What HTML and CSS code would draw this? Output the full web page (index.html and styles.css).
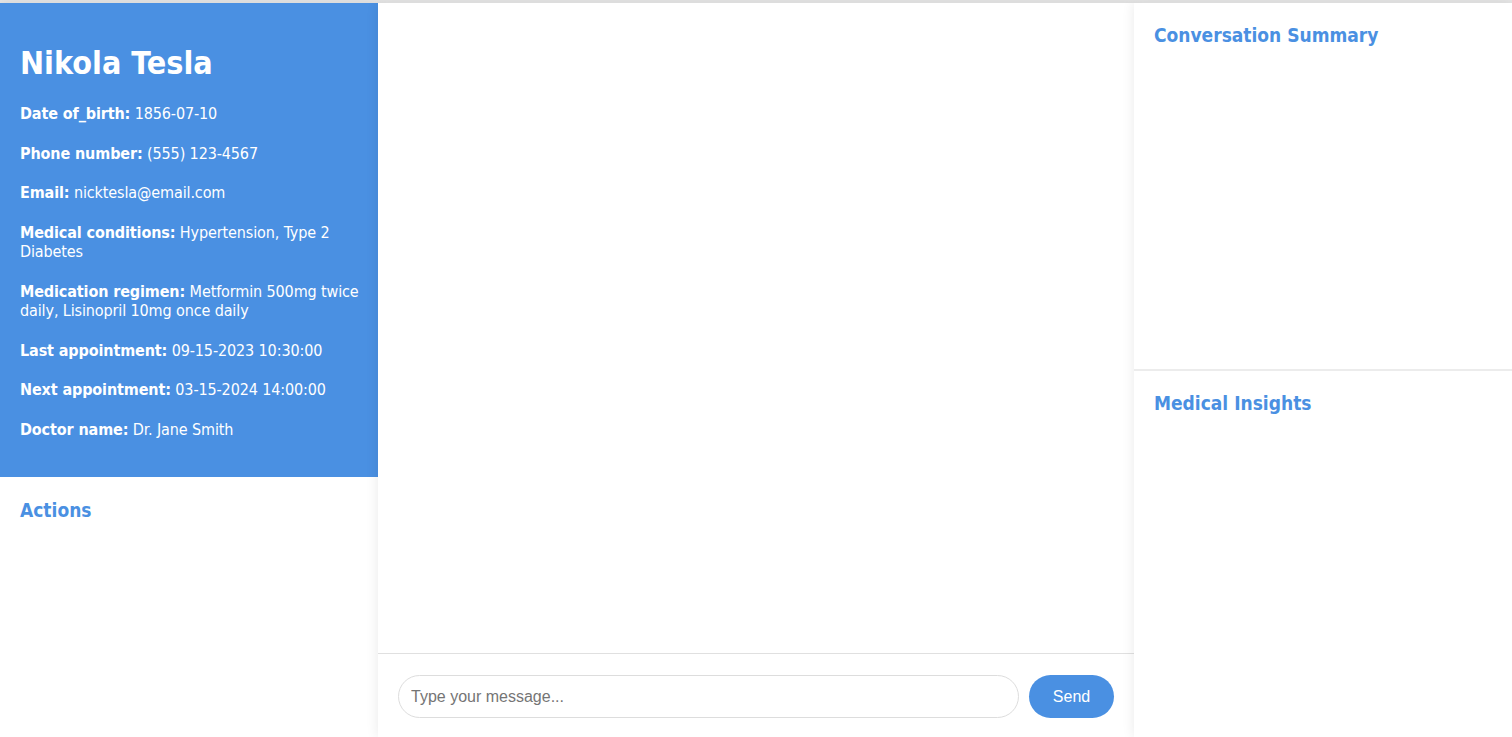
FILE: index.html
```html
<!DOCTYPE html>
<html lang="en">
<head>
<meta charset="utf-8">
<title>Patient Chat</title>
<link rel="stylesheet" href="styles.css">
</head>
<body>
<div class="app">
  <aside class="sidebar panel">
    <section class="patient">
      <h1 class="patient-name">Nikola Tesla</h1>
      <p><strong>Date of_birth:</strong> 1856-07-10</p>
      <p><strong>Phone number:</strong> (555) 123-4567</p>
      <p><strong>Email:</strong> nicktesla@email.com</p>
      <p><strong>Medical conditions:</strong> Hypertension, Type 2 Diabetes</p>
      <p><strong>Medication regimen:</strong> Metformin 500mg twice daily, Lisinopril 10mg once daily</p>
      <p><strong>Last appointment:</strong> 09-15-2023 10:30:00</p>
      <p><strong>Next appointment:</strong> 03-15-2024 14:00:00</p>
      <p><strong>Doctor name:</strong> Dr. Jane Smith</p>
    </section>
    <section class="actions">
      <h2 class="section-title">Actions</h2>
    </section>
  </aside>
  <main class="chat panel">
    <div class="messages"></div>
    <form class="composer">
      <input class="composer-input" type="text" placeholder="Type your message...">
      <button class="composer-send" type="button">Send</button>
    </form>
  </main>
  <aside class="insights panel">
    <section class="insight-block">
      <h2 class="section-title">Conversation Summary</h2>
    </section>
    <section class="insight-block insight-block--bordered">
      <h2 class="section-title">Medical Insights</h2>
    </section>
  </aside>
</div>
</body>
</html>
```
FILE: styles.css
```css
* { box-sizing: border-box; }
html, body { height: 100%; }
body {
  margin: 0;
  background: #e6e6e6;
  font-family: "DejaVu Sans Condensed", "DejaVu Sans", sans-serif;
  overflow: hidden;
}
.app {
  margin-top: 3px;
  height: 734px;
  display: grid;
  grid-template-columns: 378px 756px 378px;
}
.panel {
  background: #fff;
  box-shadow: 0 0 12px rgba(0, 0, 0, 0.09);
  display: flex;
  flex-direction: column;
  min-height: 0;
}
.patient {
  background: #4a90e2;
  color: #fff;
  padding: 20px 14px 18px 20px;
}
.patient-name {
  font-size: 32px;
  font-weight: bold;
  margin: 21px 0 22px;
  line-height: 38px;
}
.patient p {
  font-size: 16px;
  line-height: 19.5px;
  letter-spacing: -0.12px;
  margin: 20px 0;
}
.actions { padding: 20px 20px; }
.section-title {
  color: #4a90e2;
  font-size: 19px;
  font-weight: bold;
  margin: 0;
  line-height: 24px;
}
.actions .section-title { margin-top: 1px; }
.chat { z-index: 1; }
.messages { flex: 1; border-bottom: 1px solid #e0e0e0; }
.composer {
  margin: 0;
  padding: 21px 20px 19px;
  display: flex;
  gap: 10px;
  align-items: center;
}
.composer-input {
  flex: 1;
  height: 43px;
  border: 1px solid #ddd;
  border-radius: 22px;
  padding: 0 12px;
  font-family: "Liberation Sans", Arial, sans-serif;
  font-size: 16px;
  color: #333;
  outline: none;
}
.composer-input::placeholder { color: #757575; }
.composer-send {
  height: 43px;
  width: 85px;
  border: none;
  border-radius: 22px;
  background: #4a90e2;
  color: #fff;
  font-family: "Liberation Sans", Arial, sans-serif;
  font-size: 16px;
  cursor: pointer;
}
.insights { z-index: 2; }
.insight-block {
  flex: 1;
  padding: 20px;
}
.insight-block--bordered { border-top: 2px solid #ececec; }
```
